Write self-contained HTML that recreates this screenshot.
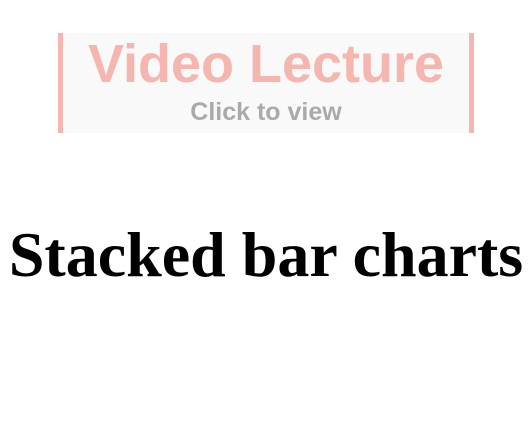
<!DOCTYPE html>
<html><head><style>
body{margin:0;width:532px;height:440px;background:#fff;position:relative;overflow:hidden}
.box{position:absolute;left:58px;top:33px;width:406px;height:100px;background:#f9f9f9;border-left:5px solid #f4b6ae;border-right:5px solid #f4b6ae}
.t{position:absolute;left:0;right:0;top:4px;text-align:center;font:bold 54px/1 "Liberation Sans",sans-serif;color:#f4b6ae}
.s{position:absolute;left:0;right:0;top:67px;text-align:center;font:bold 25px/1 "Liberation Sans",sans-serif;color:#aaa}
h1{position:absolute;left:0;right:0;top:223px;margin:0;text-align:center;font:bold 64px/1 "Liberation Serif",serif;color:#000}
</style></head><body>
<div class="box"><div class="t">Video Lecture</div><div class="s">Click to view</div></div>
<h1>Stacked bar charts</h1>
</body></html>
